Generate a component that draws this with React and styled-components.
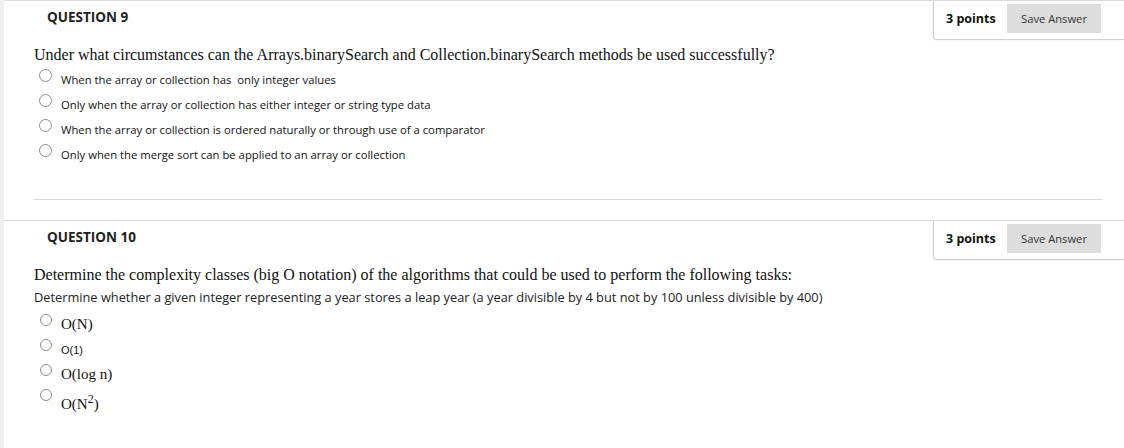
import styled, { createGlobalStyle } from "styled-components";

const GlobalStyle = createGlobalStyle`
  html, body {
    margin: 0;
    padding: 0;
    background: #ffffff;
  }
  body {
    font-family: "Open Sans", "Liberation Sans", sans-serif;
    color: #111;
  }
`;

const questions = [
  {
    id: 9,
    text: "Under what circumstances can the Arrays.binarySearch and Collection.binarySearch methods be used successfully?",
    sub: null,
    options: [
      { label: "When the array or collection has  only integer values", kind: "sans" },
      { label: "Only when the array or collection has either integer or string type data", kind: "sans" },
      { label: "When the array or collection is ordered naturally or through use of a comparator", kind: "sans" },
      { label: "Only when the merge sort can be applied to an array or collection", kind: "sans" },
    ],
    separator: true,
  },
  {
    id: 10,
    text: "Determine the complexity classes (big O notation) of the algorithms that could be used to perform the following tasks:",
    sub: "Determine whether a given integer representing a year stores a leap year (a year divisible by 4 but not by 100 unless divisible by 400)",
    options: [
      { label: "O(N)", kind: "serif" },
      { label: "O(1)", kind: "arial" },
      { label: "O(log n)", kind: "serif" },
      { label: <>O(N<sup>2</sup>)</>, kind: "serif", tall: true },
    ],
    separator: false,
  },
];

const App = () => {
  return (
    <>
      <GlobalStyle />
      <Page>
        {questions.map((q) => (
          <Question key={q.id}>
            <Header>
              <Title>QUESTION {q.id}</Title>
              <PointsBox>
                <Points>3 points</Points>
                <SaveButton>Save Answer</SaveButton>
              </PointsBox>
            </Header>
            <Body>
              <QuestionText>{q.text}</QuestionText>
              {q.sub && <SubText>{q.sub}</SubText>}
              <Options $serif={q.id === 10}>
                {q.options.map((o, i) => (
                  <Option key={i} $tall={o.tall}>
                    <Radio $small={q.id === 10} />
                    <OptionLabel $kind={o.kind} $tall={o.tall}>{o.label}</OptionLabel>
                  </Option>
                ))}
              </Options>
            </Body>
            {q.separator && <Separator />}
          </Question>
        ))}
      </Page>
    </>
  );
};

export default App;

const Page = styled.div`
  border-left: 4px solid #efefef;
  min-height: 448px;
  box-sizing: border-box;
`;

const Question = styled.div`
  border-top: 1px solid #dcdcdc;
  padding-bottom: 20px;
`;

const Header = styled.div`
  display: flex;
  justify-content: space-between;
  align-items: flex-start;
`;

const Title = styled.div`
  margin: 7px 0 0 43px;
  font-size: 13.5px;
  line-height: 18px;
  font-weight: 700;
  color: #222;
`;

const PointsBox = styled.div`
  display: flex;
  align-items: center;
  justify-content: space-between;
  width: 191px;
  box-sizing: border-box;
  padding: 3px 23px 6px 12px;
  border-left: 1px solid #d0d0d0;
  border-bottom: 1px solid #d0d0d0;
  border-bottom-left-radius: 4px;
  box-shadow: -1px 1px 1px rgba(0, 0, 0, 0.04);
`;

const Points = styled.span`
  font-size: 12.5px;
  font-weight: 700;
  color: #111;
  white-space: nowrap;
`;

const SaveButton = styled.button`
  width: 94px;
  height: 29px;
  border: none;
  background: #dddddd;
  color: #333;
  font-family: "Open Sans", "Liberation Sans", sans-serif;
  font-size: 11.2px;
  padding: 0;
`;

const Body = styled.div`
  padding-left: 30px;
`;

const QuestionText = styled.div`
  font-family: "Liberation Serif", "Times New Roman", serif;
  font-size: 16px;
  line-height: 20px;
  margin-top: 5px;
  color: #111;
`;

const SubText = styled.div`
  font-size: 12.8px;
  line-height: 18px;
  margin-top: 3px;
  color: #222;
`;

const Options = styled.div`
  display: flex;
  flex-direction: column;
  margin-top: ${(p) => (p.$serif ? "7px" : "3px")};
`;

const Option = styled.div`
  display: flex;
  align-items: flex-start;
  height: ${(p) => (p.$tall ? "36px" : "25px")};
`;

const Radio = styled.span`
  flex: none;
  box-sizing: border-box;
  width: ${(p) => (p.$small ? "12px" : "13px")};
  height: ${(p) => (p.$small ? "12px" : "13px")};
  margin: 1px 9px 0 ${(p) => (p.$small ? "6px" : "5px")};
  border: 1px solid #8d8d8d;
  border-radius: 50%;
  background: #fff;
`;

const OptionLabel = styled.span`
  font-family: ${(p) =>
    p.$kind === "serif"
      ? '"Liberation Serif", "Times New Roman", serif'
      : p.$kind === "arial"
      ? '"Liberation Sans", Arial, sans-serif'
      : '"Open Sans", "Liberation Sans", sans-serif'};
  font-size: ${(p) => (p.$kind === "serif" ? "15px" : p.$kind === "arial" ? "11px" : "11.3px")};
  line-height: 18px;
  white-space: pre;
  padding-top: ${(p) => (p.$tall ? "7px" : p.$kind === "serif" ? "2px" : "3px")};
  color: #111;

  sup {
    font-size: 12px;
    line-height: 0;
    vertical-align: 6px;
  }
`;

const Separator = styled.div`
  margin: 31px 22px 0 30px;
  border-top: 1px solid #d6d6d6;
`;
